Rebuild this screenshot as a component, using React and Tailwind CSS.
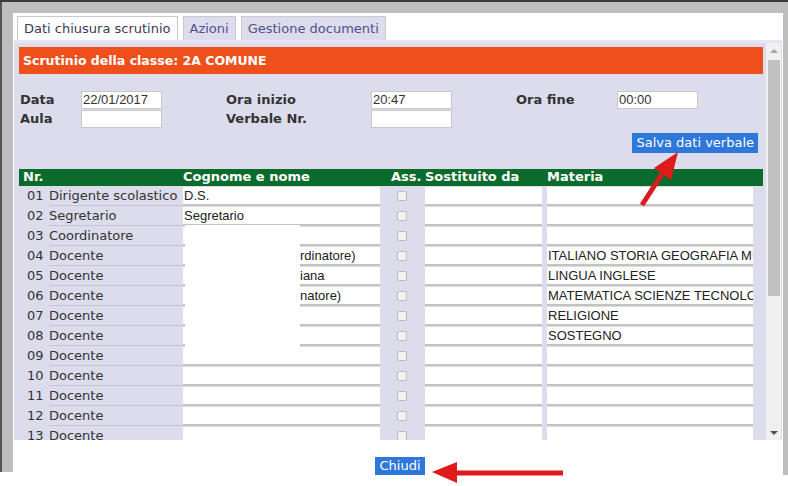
const ver = "font-['DejaVu_Sans',Verdana,sans-serif]";
const ari = "font-['Liberation_Sans',Arial,sans-serif]";

const rows = [
  ["01", "Dirigente scolastico", "D.S.", ""],
  ["02", "Segretario", "Segretario", ""],
  ["03", "Coordinatore", "", ""],
  ["04", "Docente", "rdinatore)", "ITALIANO STORIA GEOGRAFIA MUSICA"],
  ["05", "Docente", "iana", "LINGUA INGLESE"],
  ["06", "Docente", "natore)", "MATEMATICA SCIENZE TECNOLOGIA"],
  ["07", "Docente", "", "RELIGIONE"],
  ["08", "Docente", "", "SOSTEGNO"],
  ["09", "Docente", "", ""],
  ["10", "Docente", "", ""],
  ["11", "Docente", "", ""],
  ["12", "Docente", "", ""],
  ["13", "Docente", "", ""],
];

function Field({ w, value, className = "" }) {
  return (
    <div
      className={
        "h-[20px] bg-white border-t border-[#dcdcdc] border-b-2 border-b-[#c3c3c3] overflow-hidden whitespace-nowrap text-[13px] leading-[17px] text-[#222] pl-[1px] " +
        ari +
        " " +
        className
      }
      style={{ width: w }}
    >
      {value}
    </div>
  );
}

function Row({ r }) {
  const hidden = r[2] && !["D.S.", "Segretario"].includes(r[2]);
  return (
    <div className="flex h-[20px]">
      <div className="w-[164px] flex text-[13px] leading-[19px] text-[#333]">
        <span className="w-[30px] pl-[8px]">{r[0]}</span>
        <span className="flex-1 border-b border-[#c4c4d6] whitespace-nowrap">{r[1]}</span>
      </div>
      <Field w={197} value={r[2]} className={hidden ? "pl-[117px]" : ""} />
      <div className="w-[45px] flex items-start justify-center pt-[5px] pr-[2px]">
        <div className="w-[10px] h-[10px] border border-[#bcbcbc] bg-[#f2f2f2] rounded-[2px]" />
      </div>
      <Field w={117} value="" />
      <div className="w-[5px]" />
      <Field w={206} value={r[3]} />
    </div>
  );
}

export default function App() {
  return (
    <div className={"w-[788px] h-[486px] bg-white relative overflow-hidden " + ver}>
      <div className="h-[2px] bg-[#3a3a3a]" />
      <div className="flex">
        <div className="w-[13px] h-[470px] bg-[#bebebe] border-l-2 border-[#555]" />
        <div className="w-[770px] flex flex-col">
          <div className="h-[11px] bg-[#bebebe]" />
          {/* tabs */}
          <div className="flex gap-[5px] pl-[4px] pt-[3px] h-[27px]">
            <div className="px-[6px] h-[24px] bg-white border border-[#c8c8d8] border-b-0 text-[13px] leading-[23px] text-[#3b3b55]">
              Dati chiusura scrutinio
            </div>
            <div className="px-[6px] h-[24px] bg-[#dcdcec] border border-[#c8c8d8] border-b-0 text-[13px] leading-[23px] text-[#50508a]">
              Azioni
            </div>
            <div className="px-[6px] h-[24px] bg-[#dcdcec] border border-[#c8c8d8] border-b-0 text-[13px] leading-[23px] text-[#50508a]">
              Gestione documenti
            </div>
          </div>
          {/* content */}
          <div className="ml-[1px] w-[768px] h-[400px] flex bg-[#dcdcec] border-t-[3px] border-[#e6e6f2]">
            <div className="w-[752px] h-[397px] overflow-hidden pl-[5px] pr-[3px] pt-[4px] relative">
              <div className="h-[27px] bg-[#ee4f1b] text-white font-bold text-[12.5px] leading-[27px] pl-[4px]">
                Scrutinio della classe: 2A COMUNE
              </div>
              <div className="pt-[17px] flex flex-col gap-[1px] text-[13px] font-bold text-[#333]">
                <div className="flex h-[18px] items-center">
                  <span className="w-[62px] pl-[1px]">Data</span>
                  <div className={"w-[81px] h-[18px] bg-white border border-[#c8c8c8] text-[13px] font-normal leading-[16px] pl-[1px] text-[#333] " + ari}>22/01/2017</div>
                  <span className="w-[209px] pl-[64px] whitespace-nowrap">Ora inizio</span>
                  <div className={"w-[81px] h-[18px] bg-white border border-[#c8c8c8] text-[13px] font-normal leading-[16px] pl-[1px] text-[#333] " + ari}>20:47</div>
                  <span className="w-[165px] pl-[64px] whitespace-nowrap">Ora fine</span>
                  <div className={"w-[81px] h-[18px] bg-white border border-[#c8c8c8] text-[13px] font-normal leading-[16px] pl-[1px] text-[#333] " + ari}>00:00</div>
                </div>
                <div className="flex h-[18px] items-center">
                  <span className="w-[62px] pl-[1px]">Aula</span>
                  <div className="w-[81px] h-[18px] bg-white border border-[#c8c8c8]" />
                  <span className="w-[209px] pl-[64px] whitespace-nowrap">Verbale Nr.</span>
                  <div className="w-[81px] h-[18px] bg-white border border-[#c8c8c8]" />
                </div>
              </div>
              <div className="flex justify-end pr-[5px] pt-[5px]">
                <div className="h-[20px] px-[4px] bg-[#2d78d9] text-white text-[13px] leading-[20px]">
                  Salva dati verbale
                </div>
              </div>
              <div className="mt-[16px] h-[17px] bg-[#0b6b2c] flex text-white font-bold text-[13px] leading-[16px]">
                <span className="w-[164px] pl-[4px]">Nr.</span>
                <span className="w-[208px]">Cognome e nome</span>
                <span className="w-[34px]">Ass.</span>
                <span className="w-[122px]">Sostituito da</span>
                <span>Materia</span>
              </div>
              {rows.map((r) => (
                <Row key={r[0]} r={r} />
              ))}
              {/* redaction */}
              <div className="absolute left-[171px] top-[182px] w-[115px] h-[138px] bg-white" />
            </div>
            {/* scrollbar */}
            <div className="w-[15px] h-[397px] bg-[#f0f0f0] flex flex-col items-center">
              <div className="h-[15px] flex items-center justify-center">
                <div className="w-0 h-0 border-l-[4px] border-r-[4px] border-b-[4px] border-l-transparent border-r-transparent border-b-[#a3a3a3]" />
              </div>
              <div className="w-[12px] h-[236px] bg-[#c1c1c1] mt-[2px]" />
              <div className="flex-1" />
              <div className="h-[15px] flex items-center justify-center">
                <div className="w-0 h-0 border-l-[4px] border-r-[4px] border-t-[4px] border-l-transparent border-r-transparent border-t-[#505050]" />
              </div>
            </div>
          </div>
          {/* footer */}
          <div className="flex justify-center pt-[17px] pl-[4px]">
            <div className="h-[18px] px-[4px] bg-[#2d78d9] text-white text-[13px] leading-[18px]">Chiudi</div>
          </div>
        </div>
        <div className="w-[5px] h-[473px] bg-[#bebebe]" />
      </div>
      {/* annotation arrows */}
      <svg className="absolute inset-0 pointer-events-none" width="788" height="486">
        <line x1="642" y1="205" x2="662" y2="174" stroke="#dd1b1b" strokeWidth="5" />
        <polygon points="678,152 654,168 671,180" fill="#dd1b1b" />
        <line x1="563" y1="473" x2="452" y2="473" stroke="#dd1b1b" strokeWidth="5" />
        <polygon points="432,472 457,462 457,483" fill="#dd1b1b" />
      </svg>
    </div>
  );
}
